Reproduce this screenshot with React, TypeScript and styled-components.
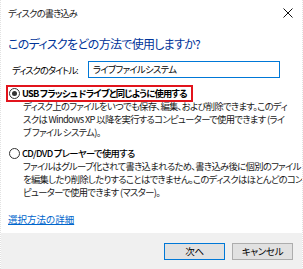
import React from "react";
import styled, { createGlobalStyle } from "styled-components";

const GlobalStyle = createGlobalStyle`
    html, body {
        margin: 0;
        padding: 0;
        background: #ffffff;
    }
    body {
        font-family: "Noto Sans CJK JP", "Noto Sans", sans-serif;
        font-feature-settings: "palt";
        color: #000000;
    }
`;

type Option = {
    label: string;
    lines: string[];
    checked: boolean;
};

const options: Option[] = [
    {
        label: "USB フラッシュ ドライブと同じように使用する",
        lines: [
            "ディスク上のファイルをいつでも保存、編集、および削除できます。このディ",
            "スクは Windows XP 以降を実行するコンピューターで使用できます (ライ",
            "ブ ファイル システム)。",
        ],
        checked: true,
    },
    {
        label: "CD/DVD プレーヤーで使用する",
        lines: [
            "ファイルはグループ化されて書き込まれるため、書き込み後に個別のファイル",
            "を編集したり削除したりすることはできません。このディスクはほとんどのコン",
            "ピューターで使用できます (マスター)。",
        ],
        checked: false,
    },
];

const App: React.FC = () => {
    return (
        <>
            <GlobalStyle />
            <Dialog>
                <TitleBar>
                    <TitleText>ディスクの書き込み</TitleText>
                    <CloseButton>
                        <svg width="10" height="10" viewBox="0 0 10 10">
                            <path
                                d="M0.5 0.5 L9.5 9.5 M9.5 0.5 L0.5 9.5"
                                stroke="#111"
                                strokeWidth="1"
                                fill="none"
                            />
                        </svg>
                    </CloseButton>
                </TitleBar>
                <Content>
                    <Heading>このディスクをどの方法で使用しますか?</Heading>
                    <TitleRow>
                        <FieldLabel>ディスクのタイトル:</FieldLabel>
                        <TitleInput>ライブファイルシステム</TitleInput>
                    </TitleRow>
                    {options.map((option) => (
                        <OptionBlock key={option.label}>
                            <OptionLabel $highlighted={option.checked}>
                                <Radio $checked={option.checked} />
                                <OptionText $bold={option.checked}>
                                    {option.label}
                                </OptionText>
                            </OptionLabel>
                            <Description>
                                {option.lines.map((line) => (
                                    <div key={line}>{line}</div>
                                ))}
                            </Description>
                        </OptionBlock>
                    ))}
                    <HelpLink>選択方法の詳細</HelpLink>
                </Content>
                <Footer>
                    <DialogButton $default>次へ</DialogButton>
                    <DialogButton>キャンセル</DialogButton>
                </Footer>
            </Dialog>
        </>
    );
};

export default App;

const Dialog = styled.div`
    width: 303px;
    height: 269px;
    box-sizing: border-box;
    display: flex;
    flex-direction: column;
    background: #ffffff;
    border-left: 1px dotted #e2e2e2;
    border-right: 1px dotted #e2e2e2;
    overflow: hidden;
`;

const TitleBar = styled.div`
    height: 26px;
    flex-shrink: 0;
    display: flex;
    align-items: center;
    justify-content: space-between;
    padding: 0 8px 0 7px;
`;

const TitleText = styled.span`
    font-size: 9.3px;
    letter-spacing: -0.85px;
    color: #1a1a1a;
`;

const CloseButton = styled.div`
    display: flex;
    align-items: center;
    margin-right: 1px;
`;

const Content = styled.div`
    flex: 1;
    display: flex;
    flex-direction: column;
    align-items: flex-start;
    padding: 0 7px;
`;

const Heading = styled.div`
    margin-top: 9px;
    font-size: 12px;
    letter-spacing: -0.7px;
    line-height: 18px;
    color: #003399;
    white-space: nowrap;
`;

const TitleRow = styled.div`
    margin-top: 8px;
    display: flex;
    align-items: center;
    padding-left: 4px;
`;

const FieldLabel = styled.span`
    width: 76px;
    flex-shrink: 0;
    font-size: 9.3px;
    letter-spacing: -1px;
    white-space: nowrap;
`;

const TitleInput = styled.div`
    box-sizing: border-box;
    width: 192px;
    height: 17px;
    border: 1px solid #0078d7;
    padding-left: 4px;
    font-size: 9.3px;
    letter-spacing: -0.65px;
    line-height: 15px;
`;

const OptionBlock = styled.div`
    display: flex;
    flex-direction: column;
    align-items: flex-start;
    margin-top: 7px;

    & + & {
        margin-top: 6px;
    }
`;

const OptionLabel = styled.div<{ $highlighted?: boolean }>`
    box-sizing: border-box;
    height: 17px;
    margin-left: -2px;
    display: flex;
    align-items: center;
    padding: 0 4px 0 1px;
    border: 2px solid ${(p) => (p.$highlighted ? "#e2141c" : "transparent")};
`;

const Radio = styled.span<{ $checked?: boolean }>`
    box-sizing: border-box;
    width: 11px;
    height: 11px;
    border-radius: 50%;
    border: 1px solid #333333;
    display: flex;
    align-items: center;
    justify-content: center;
    flex-shrink: 0;

    &::after {
        content: "";
        width: 5px;
        height: 5px;
        border-radius: 50%;
        background: #333333;
        display: ${(p) => (p.$checked ? "block" : "none")};
    }
`;

const OptionText = styled.span<{ $bold?: boolean }>`
    margin-left: 2px;
    font-size: 9.3px;
    letter-spacing: ${(p) => (p.$bold ? "-0.8px" : "-0.65px")};
    font-weight: ${(p) => (p.$bold ? 700 : 500)};
    line-height: 13px;
    white-space: nowrap;
`;

const Description = styled.div`
    margin-top: -2px;
    margin-left: 15px;
    font-size: 9.3px;
    letter-spacing: -0.65px;
    line-height: 13px;
    white-space: nowrap;
    color: #1a1a1a;
`;

const HelpLink = styled.a`
    display: block;
    margin-top: 14px;
    font-size: 9.5px;
    line-height: 13px;
    color: #0066cc;
    text-decoration: underline;
    cursor: pointer;
`;

const Footer = styled.div`
    height: 36px;
    flex-shrink: 0;
    background: #f0f0f0;
    display: flex;
    justify-content: flex-end;
    align-items: flex-start;
    gap: 7px;
    padding: 10px 9px 0 0;
    box-sizing: border-box;
`;

const DialogButton = styled.button<{ $default?: boolean }>`
    box-sizing: border-box;
    width: 61px;
    height: 17px;
    padding: 0;
    background: #e1e1e1;
    border: 1px solid ${(p) => (p.$default ? "#0078d7" : "#adadad")};
    font-family: "Noto Sans CJK JP", "Noto Sans", sans-serif;
    font-feature-settings: "palt";
    font-size: 9.5px;
    letter-spacing: -0.3px;
    color: #000000;
    line-height: 15px;
`;
